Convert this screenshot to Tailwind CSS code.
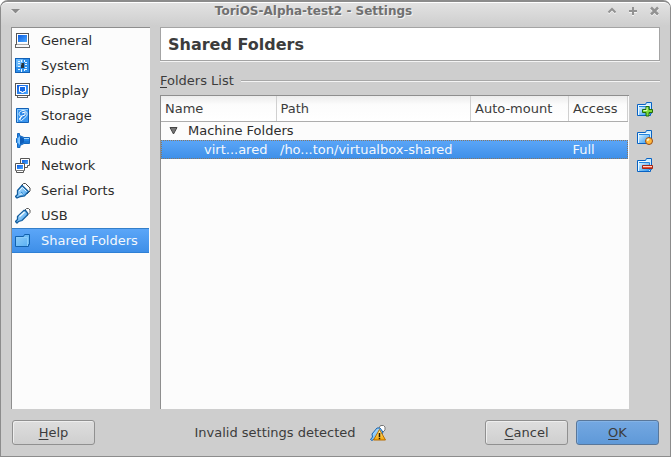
<!DOCTYPE html>
<html lang="en">
<head>
<meta charset="utf-8">
<title>ToriOS-Alpha-test2 - Settings</title>
<script src="https://cdn.jsdelivr.net/npm/@tailwindcss/browser@4"></script>
</head>
<body class="bg-white font-['DejaVu_Sans',sans-serif] text-[13px] leading-4 text-[#3c3c3c]">
<svg class="absolute size-0" aria-hidden="true">
  <defs>
    <linearGradient id="blue" x1="0" y1="0" x2="1" y2="1"><stop offset="0" stop-color="#0a5be0"/><stop offset="1" stop-color="#4aa8ff"/></linearGradient>
    <linearGradient id="sky" x1="0" y1="0" x2="1" y2="1"><stop offset="0" stop-color="#d4f0ff"/><stop offset="1" stop-color="#2f96ee"/></linearGradient>
    <linearGradient id="gold" x1="0" y1="0" x2="0" y2="1"><stop offset="0" stop-color="#fff3a0"/><stop offset="1" stop-color="#f5a400"/></linearGradient>
    <symbol id="folder" viewBox="0 0 16 16">
      <path d="M.500 2.500h8l1-2h5v11h-1v2h-13z" fill="#c8ecff" stroke="#0862c4"/>
      <path d="M2 5h10v8H2z" fill="url(#sky)"/>
      <path d="M1.500 13V3.500h11V11" fill="none" stroke="#eefaff"/>
      <path d="M2 4.500h10.500V12" fill="none" stroke="#2585db"/>
    </symbol>
  </defs>
</svg>
<div class="flex min-h-screen flex-col rounded-t-lg border border-t-2 border-[#8c8c8c] bg-[#cecece]">
  <header class="flex h-6 shrink-0 items-center rounded-t-md border-t border-white bg-linear-to-b from-[#e2e2e2] to-[#cecece] px-2 pb-[7px]">
    <button class="flex w-3 justify-center" aria-label="Window menu"><svg class="size-3 shrink-0" viewBox="0 0 12 12"><path d="M2 5h9L6.500 9z" fill="#fff"/><path d="M2 4h9L6.500 8.500z" fill="#8b8b8b"/></svg></button>
    <h1 class="flex-1 text-center text-[12px] font-bold text-[#707070] [text-shadow:1px_1px_0_#f2f2f2]">ToriOS-Alpha-test2 - Settings</h1>
    <div class="flex w-14 justify-end gap-[10px]">
      <button aria-label="Shade"><svg class="size-3" viewBox="0 0 12 12" fill="none" stroke-width="2"><path d="M2.500 8.500L6 5l3.500 3.500" stroke="#f4f4f4"/><path d="M2.500 7.500L6 4l3.500 3.500" stroke="#929292"/></svg></button>
      <button aria-label="Maximize"><svg class="size-3" viewBox="0 0 12 12" stroke-width="2"><path d="M1 7h8M5 3v8" stroke="#f4f4f4"/><path d="M1 6h8M5 2v8" stroke="#929292"/></svg></button>
      <button aria-label="Close"><svg class="size-3" viewBox="0 0 12 12" stroke-width="2.500"><path d="M1 3.500l7 7m0-7l-7 7" stroke="#f4f4f4"/><path d="M1 2.500l7 7m0-7l-7 7" stroke="#929292"/></svg></button>
    </div>
  </header>

  <main class="flex flex-1 gap-[10px] px-[10px] pt-px">
    <nav class="w-[139px] shrink-0 border-t border-l border-[#8e8e8e] bg-[#fcfcfc] text-[#2d2d2d]" aria-label="Settings categories">
      <ul class="pr-px [&_a]:flex [&_a]:h-[25px] [&_a]:items-center [&_a]:gap-[10px] [&_a]:pl-[3px] [&_svg]:size-4 [&_svg]:shrink-0">
        <li><a href="#general"><svg viewBox="0 0 16 16"><path d="M1 0h13v11H1z" fill="#555"/><path d="M2 1h11v9H2z" fill="#fff"/><path d="M3 2h9v7H3z" fill="url(#blue)"/><path d="M1 10h13v2h1v3H0v-4h1z" fill="#666"/><path d="M2 10h11v1H2zM1 12h13v2H1z" fill="#f8f8f8"/><path d="M2 11h11v1H2z" fill="#aaa"/></svg>General</a></li>
        <li><a href="#system"><svg viewBox="0 0 16 16"><path d="M0 0h15v15H0z" fill="#1260b5"/><path d="M1 1h13v13H1z" fill="#2f8fea"/><path d="M1 1h7v8H1z" fill="#68b8fb"/><path d="M3 3.500h2M3 5.500h2M3 8.500h2M3 11.500h2M10 4.500h2M10 6.500h2M10 9.500h2M10 11.500h2M6.500 2v2M9.500 2v2M6.500 11v3M9.500 11v2" stroke="#e8f6ff"/><path d="M6 5h3v5H6z" fill="#26343f"/><path d="M6 5h1v2H6z" fill="#60717c"/></svg>System</a></li>
        <li><a href="#display"><svg viewBox="0 0 16 16"><path d="M0 0h15v13H0z" fill="#555"/><path d="M1 1h13v11H1z" fill="#fff"/><path d="M2 2h11v9H2z" fill="url(#blue)"/><path d="M4.500 3.500h6v5h-2v1h-2v-1h-2z" fill="#1669e5" stroke="#fff"/><path d="M2 13h11v2H2z" fill="#666"/><path d="M3 13h9v1H3z" fill="#fff"/></svg>Display</a></li>
        <li><a href="#storage"><svg viewBox="0 0 16 16"><path d="M1.500.500h12v14h-12z" fill="#3b96ef" stroke="#1260b5"/><path d="M2.500 14V1.500H13" fill="none" stroke="#8dccff"/><path d="M8 2.500c5 0 5 5 2 7L6.500 12.500 4 11l3-3C3 9 3 3 8 2.500z" fill="#2f88e8" stroke="#e4f6ff"/><path d="M7 5l3-1v3l-3 1-2 3" fill="none" stroke="#fff"/></svg>Storage</a></li>
        <li><a href="#audio"><svg viewBox="0 0 16 16"><path d="M2.500.500h2v2L9 4.500h5.500v6H9l-4 2v2H2.500v-4l-1-1v-4l1-1z" fill="#2385e8" stroke="#1668bd"/><path d="M5 3v9L2.500 9.500v-4z" fill="#7ec4ff"/><path d="M5 3.500l4 2v4l-4 2z" fill="#0e5db9"/><path d="M9 5.500h5" stroke="#a7dcff"/><path d="M9 9h5" stroke="#1668bd"/></svg>Audio</a></li>
        <li><a href="#network"><svg viewBox="0 0 16 16"><path d="M5.500.500h9v7h-2v2h-5v-2h-2z" fill="#fff" stroke="#555"/><path d="M7 2h6v4H7z" fill="url(#blue)"/><path d="M.500 5.500h9v7h-1v2h-7v-2h-1z" fill="#fff" stroke="#555"/><path d="M2 7h6v4H2z" fill="url(#blue)"/><path d="M2 12.500h6" stroke="#777"/></svg>Network</a></li>
        <li><a href="#serial"><svg viewBox="0 0 16 16"><path d="M6 3l2.500-2.500h2l4.500 4.500v3L12 11z" fill="#fff" stroke="#454545"/><path d="M2.500 7.500L7 2.500l6.500 6-4 4.500-4 .500L2 15l-1.500-1.500 2-2z" fill="url(#sky)" stroke="#145e9e" stroke-width="1.300"/><path d="M4 8l3.500-3.500 4 4M4.500 11.500l4.500-1" fill="none" stroke="#e1f6ff"/><path d="M6 9l3 2.500" stroke="#2c87d0"/></svg>Serial Ports</a></li>
        <li><a href="#usb"><svg viewBox="0 0 16 16"><path d="M9 3L11.500.500h2l1.500 1.500v2.500L12 7.500z" fill="#fff" stroke="#555"/><path d="M2.500 8.500L9 2.500h1.500L12.500 5v2L7 12.500l-3.500 1-1.500 1.500-1.500-1.500 2-2z" fill="url(#sky)" stroke="#145e9e" stroke-width="1.300"/><path d="M4.500 8.500l5-4.500" stroke="#effaff" stroke-width="1.500"/></svg>USB</a></li>
        <li><a href="#shared" aria-current="page" class="border-y border-t-[#347fc9] border-b-[#2f80d5] bg-linear-to-b from-[#5ba6f8] to-[#3e8fe8] text-[#f4f8fc]"><svg viewBox="0 0 16 16"><path d="M.500 3.500h8l1-2h5v10h-1v2h-13z" fill="#6dbcf6" stroke="#1261ad"/><path d="M1 4h12v9H1z" fill="url(#sky)" opacity=".3"/><path d="M1 4.500h11.500V13" fill="none" stroke="#8bcdfb"/></svg>Shared Folders</a></li>
      </ul>
    </nav>

    <section class="flex min-w-0 flex-1 flex-col">
      <h2 class="flex h-[34px] shrink-0 items-center border border-[#a4a4a4] bg-white px-[7px] pt-[2px] text-base font-bold shadow-[0_1px_0_#f4f4f4]">Shared Folders</h2>
      <div class="flex h-[34px] shrink-0 items-center gap-[7px] pt-[6px]"><h3><span class="underline underline-offset-2">F</span>olders List</h3><div class="h-[2px] flex-1 border-t border-b border-t-[#a8a8a8] border-b-[#f4f4f4]"></div></div>
      <div class="flex flex-1 gap-2">
        <div class="min-w-0 flex-1 border-t border-l border-[#8e8e8e] bg-[#fcfcfc] pr-px">
          <table class="w-full table-fixed border-collapse text-left">
            <colgroup><col class="w-[115px]"><col><col class="w-[98px]"><col class="w-[59px]"></colgroup>
            <thead class="bg-linear-to-b from-[#ececec] via-[#fcfcfc] via-35% to-white">
              <tr class="h-[25px] [&>th]:border-r [&>th]:border-b [&>th]:border-r-[#d0d0d0] [&>th]:border-b-[#adadad] [&>th]:p-0 [&>th]:pt-px [&>th]:pl-1 [&>th]:font-normal"><th>Name</th><th>Path</th><th>Auto-mount</th><th>Access</th></tr>
            </thead>
            <tbody class="text-[#2d2d2d]">
              <tr class="h-[19px]"><td colspan="4" class="p-0"><div class="flex items-center gap-[9px] pl-2"><svg class="size-[10px]" viewBox="0 0 10 10"><path d="M1 1.500h7L4.500 8z" fill="#777" stroke="#444"/></svg>Machine Folders</div></td></tr>
              <tr class="h-[19px] bg-linear-to-b from-[#5ba6f8] to-[#3e8fe8] text-[#f4f8fc] outline -outline-offset-1 outline-dotted outline-[#8a7660] [&>td]:p-0 [&>td]:pl-1" aria-selected="true"><td><div class="pl-[39px]">virt...ared</div></td><td>/ho...ton/virtualbox-shared</td><td></td><td>Full</td></tr>
            </tbody>
          </table>
        </div>
        <div class="flex w-[23px] shrink-0 flex-col gap-3 pt-[7px]">
          <button aria-label="Add shared folder"><svg class="size-4" viewBox="0 0 16 16"><use href="#folder"/><path d="M9 4.500h3v3h3.500v3H12v3.500H9v-3.500H5.500v-3H9z" fill="#7fda3c" stroke="#216c08"/><path d="M10 5.500v3H6.500" stroke="#d9ffb5" fill="none"/></svg></button>
          <button aria-label="Edit shared folder"><svg class="size-4" viewBox="0 0 16 16"><use href="#folder"/><circle cx="12" cy="11" r="3.500" fill="#ffb93d" stroke="#9b4c17"/><path d="M10 10.500l2-1.500" stroke="#fff5c9" stroke-width="2"/></svg></button>
          <button aria-label="Remove shared folder"><svg class="size-4" viewBox="0 0 16 16"><use href="#folder"/><path d="M5.500 7.500h10v3h-10z" fill="#e94b35" stroke="#a42716"/><path d="M6 8.500h9" stroke="#ffd5c8"/></svg></button>
        </div>
      </div>
    </section>
  </main>

  <footer class="flex shrink-0 items-center gap-2 px-[11px] py-[11px] [&_button]:h-[25px] [&_button]:w-[83px] [&_button]:rounded-[3px] [&_button]:border">
    <button class="border-[#909090] bg-linear-to-b from-[#dedede] to-[#cfcfcf] shadow-[inset_1px_1px_0_#eeeeee]"><span class="underline underline-offset-2">H</span>elp</button>
    <p class="flex flex-1 items-center justify-center gap-[14px]">Invalid settings detected
      <svg class="size-4" viewBox="0 0 16 16" role="img" aria-label="Warning"><path d="M9 3l1.500-2.500h3l1.500 1.500v3L13 7z" fill="#fff" stroke="#777"/><path d="M2 9l5-6h3l3 4-3 6-6 1-2 1.500-1.500-1 2-2.500z" fill="url(#sky)" stroke="#1762ab"/><path d="M9.500 4.500l6 10.500h-12z" fill="url(#gold)" stroke="#b86c00"/><path d="M9.500 8v4M9.500 12.700v1.500" stroke="#221600" stroke-width="1.500"/></svg></p>
    <button class="border-[#909090] bg-linear-to-b from-[#dedede] to-[#cfcfcf] shadow-[inset_1px_1px_0_#eeeeee]"><span class="underline underline-offset-2">C</span>ancel</button>
    <button class="border-[#59779a] bg-linear-to-b from-[#74a8e2] to-[#5f99d8] shadow-[inset_1px_1px_0_#84b3e6]"><span class="underline underline-offset-2">O</span>K</button>
  </footer>
</div>
</body>
</html>
